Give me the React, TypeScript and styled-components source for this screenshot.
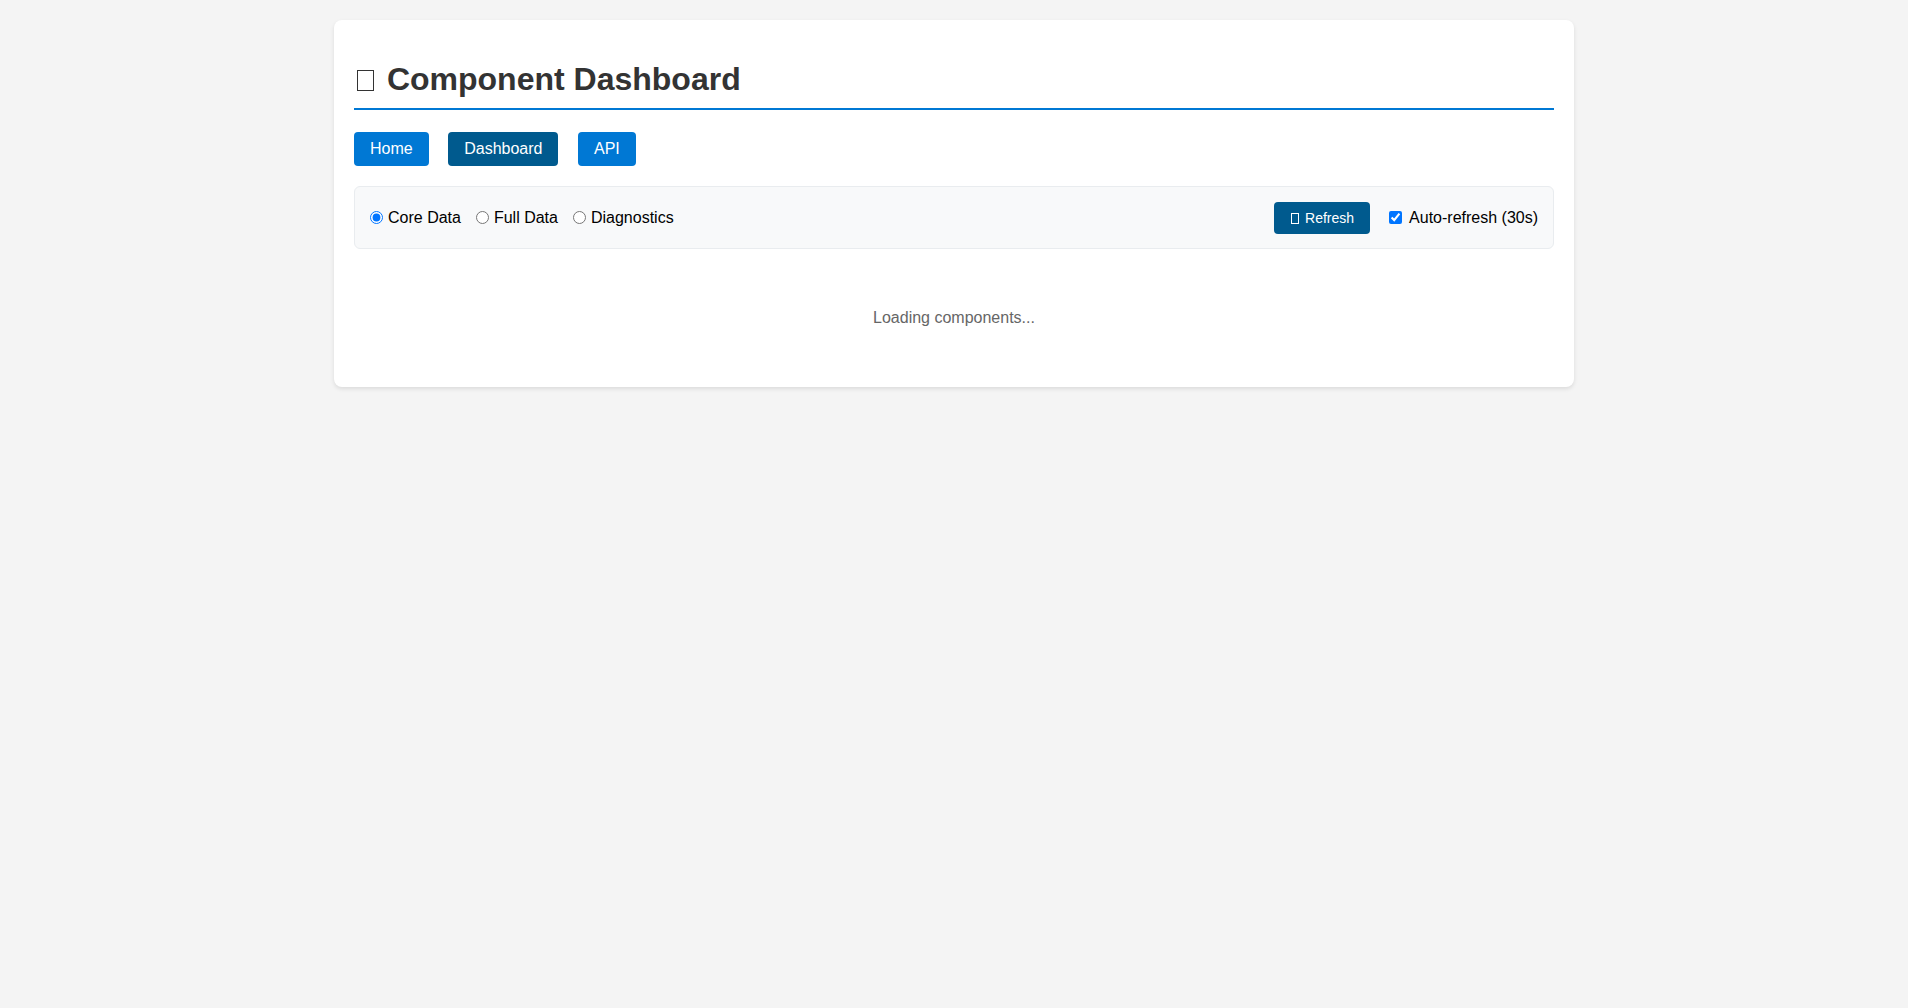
import { useState } from "react";
import styled, { createGlobalStyle } from "styled-components";

const GlobalStyle = createGlobalStyle`
  body {
    margin: 0;
    padding: 20px;
    background-color: #f4f4f4;
    font-family: "Liberation Sans", Arial, sans-serif;
    color: #333;
  }
`;

const Container = styled.div`
  max-width: 1200px;
  margin: 0 auto;
  background: white;
  padding: 20px;
  border-radius: 8px;
  box-shadow: 0 2px 4px rgba(0, 0, 0, 0.1);
`;

const Title = styled.h1`
  font-size: 32px;
  line-height: 37px;
  margin: 21px 0 22px;
  padding-bottom: 10px;
  border-bottom: 2px solid #0078d4;
  color: #333;
`;

// missing-glyph box, as the page renders its emoji
const Tofu = styled.span<{ $w: number; $h: number; $l: number; $r: number }>`
  display: inline-block;
  box-sizing: border-box;
  width: ${(p) => p.$w}px;
  height: ${(p) => p.$h}px;
  margin: 0 ${(p) => p.$r}px 0 ${(p) => p.$l}px;
  border: 1px solid currentColor;
  vertical-align: -1px;
`;

const Nav = styled.nav`
  display: flex;
  gap: 19.5px;
  margin-bottom: 20px;
`;

const NavLink = styled.a<{ $active?: boolean }>`
  display: inline-block;
  padding: 8px 16px;
  font-size: 16px;
  line-height: 18px;
  color: white;
  text-decoration: none;
  border-radius: 4px;
  background-color: ${(p) => (p.$active ? "#005a8e" : "#0078d4")};
  cursor: pointer;
`;

const Toolbar = styled.div`
  display: flex;
  justify-content: space-between;
  align-items: center;
  padding: 15px;
  height: 31px;
  background: #f8f9fa;
  border: 1px solid #e9ecef;
  border-radius: 6px;
`;

const Group = styled.div`
  display: flex;
  align-items: center;
  gap: 15px;
`;

const Option = styled.label`
  display: flex;
  align-items: center;
  font-size: 16px;
  color: #000;
  cursor: pointer;

  input {
    margin: 0 5px 0 0;
  }
`;

const CheckOption = styled(Option)`
  input {
    margin: 0 7px 0 4px;
  }
`;

const RefreshButton = styled.button`
  padding: 8px 16px;
  font-family: "Liberation Sans", Arial, sans-serif;
  font-size: 14px;
  line-height: 16px;
  color: white;
  background: #005a8e;
  border: none;
  border-radius: 4px;
  cursor: pointer;
`;

const Loading = styled.div`
  text-align: center;
  padding: 40px;
  margin-top: 20px;
  color: #666;
  font-size: 16px;
`;

export default function App() {
  const [mode, setMode] = useState("core");
  const [autoRefresh, setAutoRefresh] = useState(true);

  const modes = [
    { id: "core", label: "Core Data" },
    { id: "full", label: "Full Data" },
    { id: "diag", label: "Diagnostics" },
  ];

  return (
    <>
      <GlobalStyle />
      <Container>
        <Title>
          <Tofu $w={17} $h={21} $l={3} $r={4} /> Component Dashboard
        </Title>
        <Nav>
          <NavLink>Home</NavLink>
          <NavLink $active>Dashboard</NavLink>
          <NavLink>API</NavLink>
        </Nav>
        <Toolbar>
          <Group>
            {modes.map((m) => (
              <Option key={m.id}>
                <input
                  type="radio"
                  name="mode"
                  checked={mode === m.id}
                  onChange={() => setMode(m.id)}
                />
                {m.label}
              </Option>
            ))}
          </Group>
          <Group>
            <RefreshButton>
              <Tofu $w={8} $h={11} $l={1} $r={2} /> Refresh
            </RefreshButton>
            <CheckOption>
              <input
                type="checkbox"
                checked={autoRefresh}
                onChange={(e) => setAutoRefresh(e.target.checked)}
              />
              Auto-refresh (30s)
            </CheckOption>
          </Group>
        </Toolbar>
        <Loading>Loading components...</Loading>
      </Container>
    </>
  );
}
